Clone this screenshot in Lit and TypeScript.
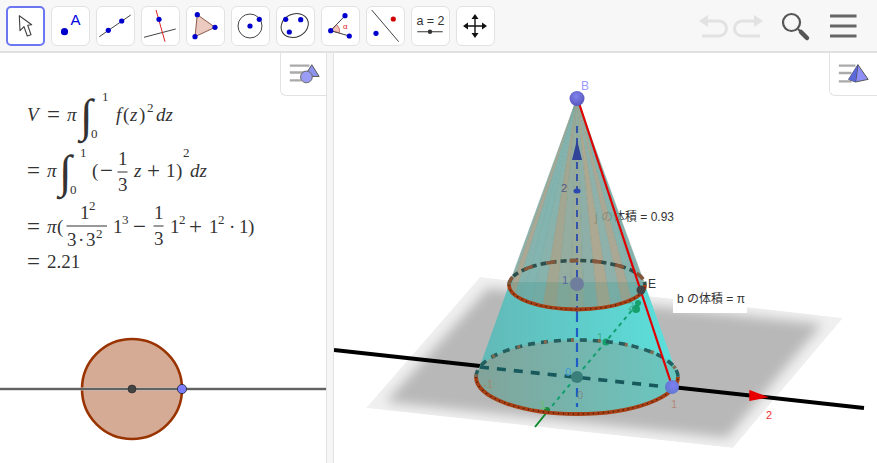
// app.ts - geometry app screen: toolbar, algebra/2D view and 3D view
import { LitElement, html, css, svg } from 'lit';
import { customElement } from 'lit/decorators.js';

const BLUE = '#0000cc';

const dot = (x: number, y: number, fill = BLUE, r = 2.6) =>
  svg`<circle cx=${x} cy=${y} r=${r} fill=${fill} />`;

// toolbar icons, drawn in the 39x39 box of a button
const TOOL_ICONS = [
  svg`<path d="M13.3 9.7 14 24.7 18 20.7 21.3 30 25 28.7 21.7 19.3 25.7 18.7Z" fill="#fff" stroke="#444" stroke-width="1.1" stroke-linejoin="round" />`,
  svg`${dot(13.5, 25.7, BLUE, 3.6)}<text x="19.5" y="19" class="tool-a">A</text>`,
  svg`<path d="M3.3 30.7 34.7 9" stroke="#444" fill="none" />${dot(12.3, 24.3)}${dot(25.7, 15)}`,
  svg`<path d="M3 31.3 34.7 23" stroke="#444" fill="none" /><path d="M15 4 24 35.7" stroke="#e02020" fill="none" />${dot(18, 13.3)}`,
  svg`<path d="M11.3 8.7 29 21.3 9 30.7Z" fill="#eccabf" stroke="#8a5a4a" />${dot(11.3, 8.7)}${dot(29, 21.3)}${dot(9, 30.7)}`,
  svg`<circle cx="19" cy="20" r="12" fill="none" stroke="#444" />${dot(19, 20)}${dot(28.3, 13.3)}`,
  svg`<ellipse cx="18.7" cy="19.5" rx="14" ry="11.5" transform="rotate(-25 18.7 19.5)" fill="none" stroke="#333" />${dot(9.7, 13.3)}${dot(13.3, 26)}${dot(24.7, 13.7)}`,
  svg`<path d="M9.7 24.7 15.5 18.5A9 9 0 0 1 18.6 26.8Z" fill="#f4c4bc" stroke="#c06050" stroke-width=".8" /><path d="M9.7 24.7 24 9.7M9.7 24.7 28.3 30" stroke="#444" fill="none" />${dot(9.7, 24.7)}${dot(24, 9.7)}${dot(28.3, 30)}<text x="22" y="22.5" class="tool-alpha">α</text>`,
  svg`<path d="M5.7 4 32.7 35.7" stroke="#444" fill="none" />${dot(27.3, 13, '#d00000')}${dot(10, 27.3)}`,
  svg`<text x="19.5" y="19" text-anchor="middle" class="tool-slider">a = 2</text><path d="M6.3 25.7H31.7" stroke="#555" stroke-width="1.2" />${dot(19, 25.7, '#333', 2.2)}`,
  svg`<path d="M19 12V28M11 20H27" stroke="#111" stroke-width="1.4" /><path d="M19 8 22.5 13H15.5ZM19 32 22.5 27H15.5ZM7 20 12 16.5V23.5ZM31 20 26 16.5V23.5Z" fill="#111" />`
];

// stripes of the cone surface, fanning out from the apex to the front of the upper circle
const APEX = { x: 577, y: 98 };
const STRIPE_COLORS = ['#7ba59d', '#889e8c', '#74a69f', '#9c9a82', '#7ca298', '#94987f', '#72a6a0', '#9f9a80', '#84a090', '#70a8a3'];

function coneStripes() {
  const n = 15;
  const parts = [];
  for (let i = 0; i < n; i++) {
    const a0 = Math.PI - (Math.PI * i) / n;
    const a1 = Math.PI - (Math.PI * (i + 1)) / n;
    const p0 = `${577 + 68 * Math.cos(a0)},${285 + 24.5 * Math.sin(a0)}`;
    const p1 = `${577 + 68 * Math.cos(a1)},${285 + 24.5 * Math.sin(a1)}`;
    const fill = STRIPE_COLORS[(i * 3) % STRIPE_COLORS.length];
    parts.push(svg`<polygon points="${APEX.x},${APEX.y} ${p0} ${p1}" fill=${fill} fill-opacity=".86" stroke=${fill} stroke-width=".4" />`);
  }
  return parts;
}

@customElement('app-root')
export class AppRoot extends LitElement {
  static override styles = css`
    :host {
      display: block;
      width: 877px;
      height: 463px;
      overflow: hidden;
      background: #fff;
      font-family: 'Liberation Sans', Arial, sans-serif;
    }

    .app {
      display: flex;
      flex-direction: column;
      height: 100%;
    }

    .toolbar {
      flex: none;
      box-sizing: border-box;
      height: 53px;
      display: flex;
      align-items: flex-start;
      gap: 6px;
      padding: 6px 0 0 6px;
      background: #f7f7f7;
      border-bottom: 2px solid #e1e1e1;
    }

    .tool {
      flex: none;
      box-sizing: border-box;
      width: 39px;
      height: 40px;
      background: #fff;
      border: 1px solid #e2e2e2;
      border-radius: 6px;
      position: relative;
    }

    .tool.active {
      border: 2px solid #6b77f2;
      border-radius: 5px;
    }

    .tool svg {
      position: absolute;
      left: -1px;
      top: -1px;
      width: 39px;
      height: 40px;
    }

    .tool.active svg {
      left: -2px;
      top: -2px;
    }

    .tool-a {
      font: 15px 'Liberation Sans', sans-serif;
      fill: #0000e0;
    }

    .tool-alpha {
      font: 8px 'Liberation Sans', sans-serif;
      fill: #e02020;
    }

    .tool-slider {
      font: 12.5px 'Liberation Sans', sans-serif;
      fill: #333;
    }

    .actions {
      margin-left: auto;
      width: 180px;
      height: 46px;
      margin-top: -6px;
    }

    .main {
      flex: 1;
      display: flex;
      min-height: 0;
    }

    .view {
      position: relative;
      background: #fff;
    }

    .view.left {
      flex: none;
      width: 326px;
    }

    .view.right {
      flex: 1;
    }

    .view svg.canvas {
      display: block;
      width: 100%;
      height: 100%;
    }

    .divider {
      flex: none;
      box-sizing: border-box;
      width: 8px;
      background: #f6f6f6;
      border-left: 1px solid #e2e2e2;
      border-right: 1px solid #e2e2e2;
    }

    .style-btn {
      position: absolute;
      top: 0;
      right: 0;
      box-sizing: border-box;
      width: 46px;
      height: 43px;
      background: #fff;
      border-left: 1px solid #e2e2e2;
      border-bottom: 1px solid #e2e2e2;
      border-bottom-left-radius: 6px;
    }

    .view.right .style-btn {
      width: 48px;
    }

    .style-btn svg {
      display: block;
      width: 100%;
      height: 100%;
    }

    .m {
      font: 19px 'Liberation Serif', 'Times New Roman', serif;
      fill: #333;
    }

    .m.i {
      font-style: italic;
    }

    .m.s {
      font-size: 13px;
    }

    .m.op {
      font-size: 23px;
    }

    .m.big {
      font-size: 46px;
      font-weight: 400;
    }

    .l3 {
      font: 12px 'Liberation Sans', 'Noto Sans CJK JP', sans-serif;
      fill: #333;
    }

    .tick {
      font: 11px 'Liberation Sans', sans-serif;
    }
  `;

  private renderFormula() {
    return svg`
      <text x="27" y="121" class="m i">V</text>
      <text x="47" y="122" class="m op">=</text>
      <text x="67" y="121" class="m i">π</text>
      <text x="80" y="131" class="m big i">∫</text>
      <text x="102" y="101" class="m s">1</text>
      <text x="91" y="138" class="m s">0</text>
      <text x="116" y="121" class="m i">f</text>
      <text x="123" y="121" class="m">(</text>
      <text x="130" y="121" class="m i">z</text>
      <text x="139" y="121" class="m">)</text>
      <text x="147" y="112" class="m s">2</text>
      <text x="156" y="121" class="m i">dz</text>

      <text x="27" y="178" class="m op">=</text>
      <text x="47" y="177" class="m i">π</text>
      <text x="59" y="187" class="m big i">∫</text>
      <text x="80" y="157" class="m s">1</text>
      <text x="70" y="194" class="m s">0</text>
      <text x="92" y="177" class="m">(</text>
      <text x="100" y="178" class="m op">−</text>
      <text x="118" y="165" class="m">1</text>
      <path d="M117.5 172H127.5" stroke="#333" />
      <text x="118" y="191" class="m">3</text>
      <text x="134" y="177" class="m i">z</text>
      <text x="147" y="178" class="m op">+</text>
      <text x="166" y="177" class="m">1</text>
      <text x="176" y="177" class="m">)</text>
      <text x="183" y="157" class="m s">2</text>
      <text x="190" y="177" class="m i">dz</text>

      <text x="27" y="234" class="m op">=</text>
      <text x="47" y="233" class="m i">π</text>
      <text x="57" y="233" class="m">(</text>
      <text x="80" y="219" class="m">1</text>
      <text x="89" y="210" class="m s">2</text>
      <path d="M66.5 226H107" stroke="#333" />
      <text x="67" y="246" class="m">3</text>
      <text x="78" y="246" class="m">·</text>
      <text x="86" y="246" class="m">3</text>
      <text x="96" y="238" class="m s">2</text>
      <text x="113" y="233" class="m">1</text>
      <text x="122" y="224" class="m s">3</text>
      <text x="133" y="234" class="m op">−</text>
      <text x="154" y="219" class="m">1</text>
      <path d="M153.5 226H163.5" stroke="#333" />
      <text x="154" y="245" class="m">3</text>
      <text x="170" y="233" class="m">1</text>
      <text x="179" y="224" class="m s">2</text>
      <text x="189" y="234" class="m op">+</text>
      <text x="209" y="233" class="m">1</text>
      <text x="218" y="224" class="m s">2</text>
      <text x="229" y="233" class="m">·</text>
      <text x="239" y="233" class="m">1</text>
      <text x="248" y="233" class="m">)</text>

      <text x="27" y="269" class="m op">=</text>
      <text x="47" y="268" class="m">2.21</text>
    `;
  }

  private renderCircle() {
    return svg`
      <circle cx="132" cy="389" r="50" fill="#d6ab96" stroke="#993300" stroke-width="2.6" />
      <path d="M0 389H326" stroke="#bbb" stroke-width="3" />
      <path d="M0 389H326" stroke="#444" stroke-width="1.4" />
      <circle cx="132" cy="389" r="4" fill="#444" stroke="#222" stroke-width=".6" />
      <circle cx="182" cy="389" r="4.6" fill="#7d7dff" stroke="#222" stroke-width=".8" />
    `;
  }

  private renderScene() {
    return svg`
      <defs>
        <clipPath id="planeClip"><polygon points="480,277 843,318 733,448 366,408" /></clipPath>
        <filter id="soft" x="-20%" y="-20%" width="140%" height="140%"><feGaussianBlur stdDeviation="6" /></filter>
        <linearGradient id="frustum" x1="0" x2="1" y1="0" y2="0">
          <stop offset="0" stop-color="#62b8b6" />
          <stop offset="1" stop-color="#5ce0dc" />
        </linearGradient>
        <linearGradient id="baseFill" x1="0" x2="1" y1="0" y2="0">
          <stop offset="0" stop-color="#82a399" />
          <stop offset="1" stop-color="#68c8c2" />
        </linearGradient>
        <radialGradient id="apexBall" cx=".45" cy=".35" r=".7">
          <stop offset="0" stop-color="#8383ee" />
          <stop offset="1" stop-color="#5252b8" />
        </radialGradient>
        <radialGradient id="pointBall" cx=".6" cy=".4" r=".7">
          <stop offset="0" stop-color="#7f7ff5" />
          <stop offset="1" stop-color="#5a78c8" />
        </radialGradient>
      </defs>

      <g clip-path="url(#planeClip)">
        <polygon points="480,277 843,318 733,448 366,408" fill="#f0f0f0" />
        <polygon points="488,288 822,324 727,438 386,402" fill="#b8b8b8" filter="url(#soft)" />
      </g>

      <path d="M334 350 480 366" stroke="#000" stroke-width="4" />
      <path d="M672 387 864 408" stroke="#000" stroke-width="4" />
      <path d="M750 391 766 397 750 400Z" fill="#e80000" stroke="#e80000" stroke-width="1.5" />

      <text x="595" y="221" class="l3">j の体積 = 0.93</text>

      <path d="M510 282 476 377A101 37 0 0 0 678 377L644 282Z" fill="url(#frustum)" />
      <ellipse cx="577.5" cy="377" rx="101" ry="37" fill="url(#baseFill)" />
      ${coneStripes()}

      <path d="M577 126V320" stroke="#3553a8" stroke-width="2" stroke-dasharray="7 5" />
      <path d="M577 140 582 160H572Z" fill="#2f4498" />
      <ellipse cx="577" cy="191" rx="3.5" ry="2.5" fill="#2a48b0" />
      <text x="561" y="192" class="tick" fill="#4d5a8c">2</text>
      <text x="562" y="284" class="tick" fill="#5566a0">1</text>
      <circle cx="577" cy="284" r="7" fill="#6e7e9c" />
      <path d="M577 313V407" stroke="#1f5cc8" stroke-width="2.2" stroke-dasharray="9 6" />

      <path d="M480 367 668 387" stroke="#17595c" stroke-width="3.6" stroke-dasharray="9 8" />
      <path d="M535 427 547 412" stroke="#0c8a2c" stroke-width="2" />
      <path d="M547 412 638 303" stroke="#12a070" stroke-width="2" stroke-dasharray="4 4" />
      <circle cx="606" cy="342" r="3.500" fill="#15a06c" />
      <circle cx="636" cy="309" r="4" fill="#15a06c" />
      <circle cx="638" cy="303" r="3" fill="#15a06c" />
      <circle cx="547" cy="410" r="3" fill="#1a8a3c" />
      <text x="597" y="341" class="tick" fill="#3fae88">1</text>
      <text x="540" y="409" class="tick" fill="#6ac070">1</text>
      <text x="628" y="310" class="tick" fill="#3fae88">2</text>

      <circle cx="577" cy="377" r="6" fill="#3a7f7c" />
      <text x="565" y="376" class="tick" fill="#3c9ad8">0</text>
      <text x="577" y="399" class="tick" fill="#7d8c88">0</text>
      <text x="483" y="388" class="tick" fill="#a08a70">-1</text>

      <path d="M476 377A101 37 0 0 1 678 377" fill="none" stroke="#245e5e" stroke-width="3.600" stroke-dasharray="7 6" />
      <path d="M476 377A101 37 0 0 1 678 377" fill="none" stroke="#846a50" stroke-width="3.600" stroke-dasharray="3 24" />
      <path d="M476 377A101 37 0 0 0 678 377" fill="none" stroke="#a63e14" stroke-width="3.800" />
      <path d="M476 377A101 37 0 0 0 678 377" fill="none" stroke="#3a1808" stroke-width="1.400" stroke-dasharray="1 4" />

      <path d="M509 285A68 24.5 0 0 1 645 285" fill="none" stroke="#2e4f4c" stroke-width="3.600" stroke-dasharray="6 4" />
      <path d="M509 285A68 24.5 0 0 1 645 285" fill="none" stroke="#85583c" stroke-width="3.600" stroke-dasharray="9 14" />
      <path d="M509 285A68 24.5 0 0 0 645 285" fill="none" stroke="#a63e14" stroke-width="3.800" />
      <path d="M509 285A68 24.5 0 0 0 645 285" fill="none" stroke="#3a1808" stroke-width="1.400" stroke-dasharray="1 4" />

      <path d="M578 100 672 386" stroke="#e00000" stroke-width="2.200" />
      <circle cx="641" cy="290" r="4.500" fill="#444" />
      <circle cx="577" cy="98.500" r="7.500" fill="url(#apexBall)" />
      <circle cx="672" cy="387" r="7" fill="url(#pointBall)" />

      <text x="581" y="90" class="l3" style="fill:#9a9aff">B</text>
      <text x="648" y="288" class="l3">E</text>
      <text x="671" y="408" class="tick" fill="#b28a78">1</text>
      <text x="766" y="419" class="tick" fill="#f03030">2</text>

      <rect x="673" y="293" width="74" height="20" fill="#fff" />
      <text x="677" y="303" class="l3">b の体積 = π</text>
    `;
  }

  override render() {
    return html`
      <div class="app">
        <div class="toolbar">
          ${TOOL_ICONS.map(
            (icon, i) => html`
              <div class="tool ${i === 0 ? 'active' : ''}">
                <svg viewBox="0 0 39 40">${icon}</svg>
              </div>
            `
          )}
          <svg class="actions" viewBox="697 0 180 46">
            <g fill="none" stroke="#e2e2e2" stroke-width="3">
              <path d="M703 21H719A7 7 0 0 1 719 36H702" />
              <path d="M758 21H742A7 7 0 0 0 742 36H760" />
            </g>
            <path d="M699 21 708 15V27ZM763 21 754 15V27Z" fill="#e2e2e2" />
            <circle cx="791.500" cy="22.500" r="8.500" fill="none" stroke="#555" stroke-width="2.200" />
            <path d="M798 29 807 38" stroke="#555" stroke-width="2" />
            <path d="M801 32 807 38" stroke="#555" stroke-width="4.500" stroke-linecap="round" />
            <path d="M830 16H856.500M830 26H856.500M830 36H856.500" stroke="#666" stroke-width="3" />
          </svg>
        </div>
        <div class="main">
          <div class="view left">
            <svg class="canvas" viewBox="0 53 326 410">
              ${this.renderFormula()} ${this.renderCircle()}
            </svg>
            <div class="style-btn">
              <svg viewBox="280 53 46 43">
                <path d="M289 66H309M289 73H306M289 81H301" stroke="#aaa" stroke-width="2.400" />
                <path d="M311.500 65 319 77H304Z" fill="#8f93f0" stroke="#555" />
                <circle cx="306" cy="77.500" r="6" fill="#9a9cf5" stroke="#666" />
              </svg>
            </div>
          </div>
          <div class="divider"></div>
          <div class="view right">
            <svg class="canvas" viewBox="334 53 543 410">${this.renderScene()}</svg>
            <div class="style-btn">
              <svg viewBox="829 53 48 43">
                <path d="M838 66H855M838 73.500H851M838 82H851" stroke="#aaa" stroke-width="2.400" />
                <path d="M857.500 65 868 80 855 82.700 848 80Z" fill="#8f8ff8" stroke="#555" />
                <path d="M857.500 65 855 82.700" stroke="#444" stroke-width="1.200" />
                <path d="M857.500 65 848 80 855 82.700Z" fill="#5a68d8" />
              </svg>
            </div>
          </div>
        </div>
      </div>
    `;
  }
}

declare global {
  interface HTMLElementTagNameMap {
    'app-root': AppRoot;
  }
}
